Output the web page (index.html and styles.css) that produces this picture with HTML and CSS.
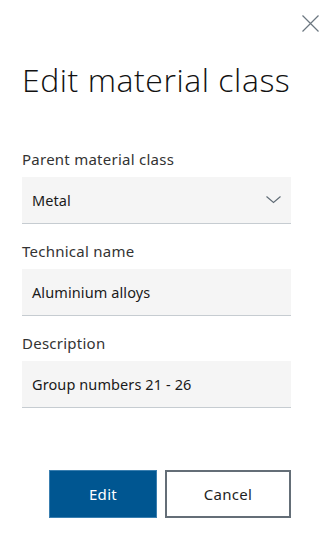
FILE: index.html
```html
<!DOCTYPE html>
<html lang="en">
<head>
<meta charset="utf-8">
<title>Edit material class</title>
<link rel="stylesheet" href="styles.css">
</head>
<body>
<div class="dialog">
  <div class="close-row">
    <button class="close" aria-label="Close">
      <svg width="17" height="17" viewBox="0 0 17 17"><path d="M0.5 0.5 L16.5 16.5 M16.5 0.5 L0.5 16.5" stroke="#6c7780" stroke-width="1.2" fill="none"/></svg>
    </button>
  </div>
  <div class="content">
    <h1 class="title">Edit material class</h1>
    <div class="field">
      <label class="label">Parent material class</label>
      <div class="box select">
        <span class="value">Metal</span>
        <svg class="chevron" width="15" height="8" viewBox="0 0 15 8"><path d="M0.5 0.5 L7.5 6.5 L14.5 0.5" stroke="#5f6b75" stroke-width="1.1" fill="none"/></svg>
      </div>
    </div>
    <div class="field">
      <label class="label">Technical name</label>
      <div class="box"><span class="value">Aluminium alloys</span></div>
    </div>
    <div class="field">
      <label class="label">Description</label>
      <div class="box"><span class="value">Group numbers 21 - 26</span></div>
    </div>
    <div class="actions">
      <button class="btn primary">Edit</button>
      <button class="btn secondary">Cancel</button>
    </div>
  </div>
</div>
</body>
</html>
```
FILE: styles.css
```css
* { box-sizing: border-box; }
html, body { margin: 0; padding: 0; background: #ffffff; }
body {
  font-family: "Noto Sans", "Liberation Sans", Arial, sans-serif;
  color: #1f1f1f;
  width: 329px;
  height: 533px;
  overflow: hidden;
}
.dialog {
  padding: 15px 10px 0 22px;
}
.close-row {
  display: flex;
  justify-content: flex-end;
  height: 17px;
}
.close {
  border: 0;
  background: none;
  padding: 0;
  width: 17px;
  height: 17px;
  display: block;
}
.close svg { display: block; }
.content {
  margin-right: 28px;
}
.title {
  margin: 28px 0 0 0;
  font-family: "Open Sans", "Noto Sans", sans-serif;
  font-size: 32px;
  line-height: 40px;
  font-weight: 300;
  color: #111;
  letter-spacing: 0.55px;
}
.field {
  display: flex;
  flex-direction: column;
}
.title + .field { margin-top: 49px; }
.field + .field { margin-top: 17px; }
.label {
  font-size: 15px;
  line-height: 20px;
  color: #333;
  margin-bottom: 8px;
  letter-spacing: 0.25px;
}
.box {
  height: 47px;
  background: #f5f5f5;
  border-bottom: 1px solid #c6ccd1;
  display: flex;
  align-items: center;
  padding: 0 10px;
}
.value {
  font-size: 14.5px;
  color: #1a1a1a;
  letter-spacing: 0.1px;
}
.select { justify-content: space-between; }
.chevron { display: block; }
.actions {
  display: flex;
  justify-content: flex-end;
  gap: 8px;
  margin-top: 62px;
}
.btn {
  height: 48px;
  font-family: inherit;
  font-size: 15px;
  padding: 0;
  letter-spacing: 0.3px;
}
.primary {
  width: 108px;
  background: #005691;
  color: #fff;
  border: 1px solid #3a7fb0;
}
.secondary {
  width: 126px;
  background: #fff;
  color: #1f1f1f;
  border: 2px solid #646e77;
}
```
